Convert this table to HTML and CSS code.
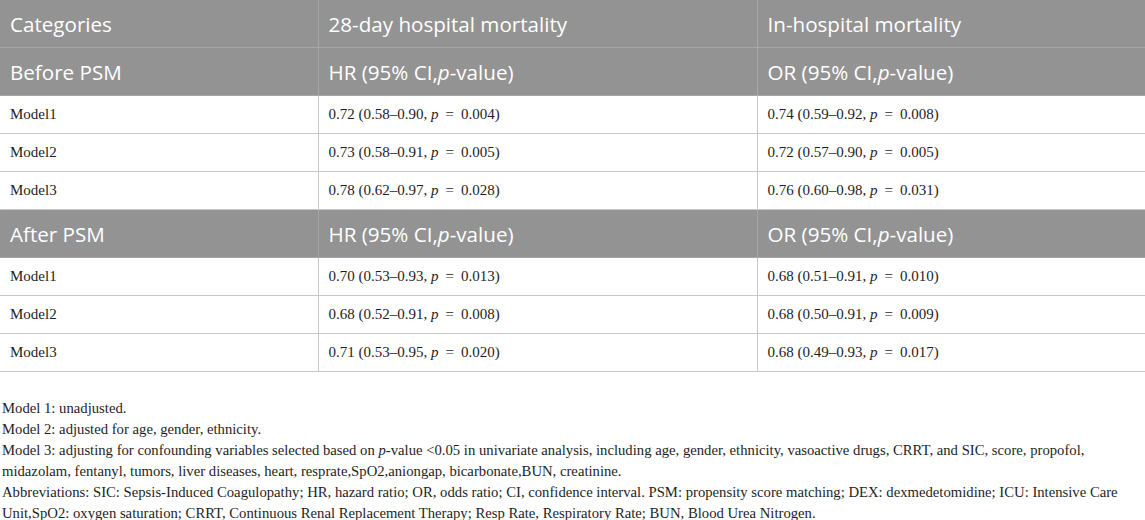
FILE: index.html
```html
<!DOCTYPE html>
<html>
<head>
	<title>mortality table</title>

	<link rel="stylesheet" href="styles.css">

</head>
<body>

	<table class="results">
		<colgroup>
			<col class="col-cat">
			<col class="col-hr">
			<col class="col-or">
		</colgroup>
		<thead>
			<tr class="head">
				<th>Categories</th>
				<th>28-day hospital mortality</th>
				<th>In-hospital mortality</th>
			</tr>
		</thead>
		<tbody>
			<tr class="head">
				<th>Before PSM</th>
				<th>HR (95% CI,<i>p</i>-value)</th>
				<th>OR (95% CI,<i>p</i>-value)</th>
			</tr>
			<tr>
				<td>Model1</td>
				<td>0.72 (0.58–0.90, <i>p</i><span class="eq">=</span>0.004)</td>
				<td>0.74 (0.59–0.92, <i>p</i><span class="eq">=</span>0.008)</td>
			</tr>
			<tr>
				<td>Model2</td>
				<td>0.73 (0.58–0.91, <i>p</i><span class="eq">=</span>0.005)</td>
				<td>0.72 (0.57–0.90, <i>p</i><span class="eq">=</span>0.005)</td>
			</tr>
			<tr>
				<td>Model3</td>
				<td>0.78 (0.62–0.97, <i>p</i><span class="eq">=</span>0.028)</td>
				<td>0.76 (0.60–0.98, <i>p</i><span class="eq">=</span>0.031)</td>
			</tr>
			<tr class="head">
				<th>After PSM</th>
				<th>HR (95% CI,<i>p</i>-value)</th>
				<th>OR (95% CI,<i>p</i>-value)</th>
			</tr>
			<tr>
				<td>Model1</td>
				<td>0.70 (0.53–0.93, <i>p</i><span class="eq">=</span>0.013)</td>
				<td>0.68 (0.51–0.91, <i>p</i><span class="eq">=</span>0.010)</td>
			</tr>
			<tr>
				<td>Model2</td>
				<td>0.68 (0.52–0.91, <i>p</i><span class="eq">=</span>0.008)</td>
				<td>0.68 (0.50–0.91, <i>p</i><span class="eq">=</span>0.009)</td>
			</tr>
			<tr>
				<td>Model3</td>
				<td>0.71 (0.53–0.95, <i>p</i><span class="eq">=</span>0.020)</td>
				<td>0.68 (0.49–0.93, <i>p</i><span class="eq">=</span>0.017)</td>
			</tr>
		</tbody>
	</table>

	<div class="notes">
		<p>Model 1: unadjusted.</p>
		<p>Model 2: adjusted for age, gender, ethnicity.</p>
		<p>Model 3: adjusting for confounding variables selected based on <i>p</i>-value &lt;0.05 in univariate analysis, including age, gender, ethnicity, vasoactive drugs, CRRT, and SIC, score, propofol,<br>midazolam, fentanyl, tumors, liver diseases, heart, resprate,SpO2,aniongap, bicarbonate,BUN, creatinine.</p>
		<p>Abbreviations: SIC: Sepsis-Induced Coagulopathy; HR, hazard ratio; OR, odds ratio; CI, confidence interval. PSM: propensity score matching; DEX: dexmedetomidine; ICU: Intensive Care<br>Unit,SpO2: oxygen saturation; CRRT, Continuous Renal Replacement Therapy; Resp Rate, Respiratory Rate; BUN, Blood Urea Nitrogen.</p>
	</div>

</body>
</html>
```

FILE: styles.css
```css
	body{
		margin: 0;
		font-family: "Liberation Serif", serif;
		color: #1e1e1e;
		background: #fff;
	}

	.results{
		width: 1145px;
		border-collapse: collapse;
		table-layout: fixed;
	}

	.col-cat{ width: 318px; }
	.col-hr{ width: 439px; }
	.col-or{ width: 388px; }

	.results th{
		height: 47px;
		padding: 0 10px;
		text-align: left;
		font-family: "Open Sans", sans-serif;
		font-size: 20.6px;
		font-weight: normal;
		color: #fff;
		background-color: #939393;
		border: 1px solid #a6a6a6;
		border-top: 0;
	}

	.results td{
		height: 37px;
		padding: 0 10px;
		font-size: 15px;
		border: 1px solid #c8c8c8;
	}

	.results td:first-child,
	.results th:first-child{
		border-left: 0;
	}

	.eq{
		margin: 0 7px;
	}

	.notes{
		margin-top: 26px;
		padding-left: 2px;
		font-size: 14.7px;
		line-height: 21px;
	}

	.notes p{
		margin: 0;
	}
```
